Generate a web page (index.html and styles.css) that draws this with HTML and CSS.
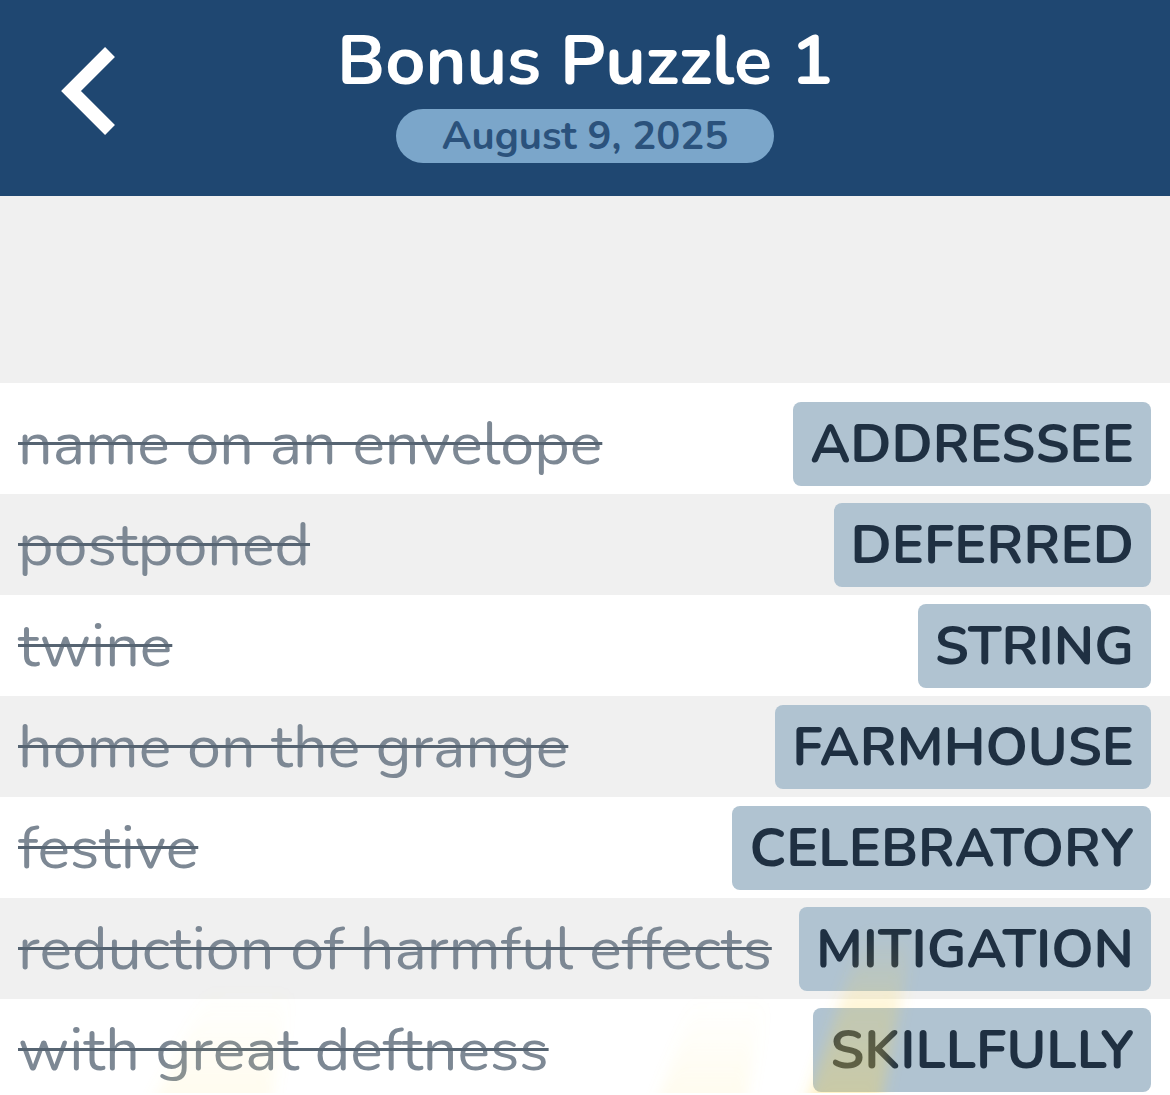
FILE: index.html
```html
<!DOCTYPE html>
<html>
<head>
    <title>Bonus Puzzle 1</title>
    <link rel="stylesheet" href="styles.css">
</head>
<body>
    <div class="header">
        <a class="back" href="#">
            <svg width="60" height="92" viewBox="0 0 60 92">
                <polyline points="50,6 11,45 50,84" fill="none" stroke="#fff" stroke-width="14" stroke-linejoin="miter"/>
            </svg>
        </a>
        <div class="title-block">
            <h1>Bonus Puzzle 1</h1>
            <div class="date">August 9, 2025</div>
        </div>
        <div></div>
    </div>

    <div class="spacer"></div>

    <div class="clues">
        <div class="clue-row">
            <span class="clue">name on an envelope</span>
            <span class="answer">ADDRESSEE</span>
        </div>
        <div class="clue-row">
            <span class="clue">postponed</span>
            <span class="answer">DEFERRED</span>
        </div>
        <div class="clue-row">
            <span class="clue">twine</span>
            <span class="answer">STRING</span>
        </div>
        <div class="clue-row">
            <span class="clue">home on the grange</span>
            <span class="answer">FARMHOUSE</span>
        </div>
        <div class="clue-row">
            <span class="clue">festive</span>
            <span class="answer">CELEBRATORY</span>
        </div>
        <div class="clue-row">
            <span class="clue">reduction of harmful effects</span>
            <span class="answer">MITIGATION</span>
        </div>
        <div class="clue-row">
            <span class="clue">with great deftness</span>
            <span class="answer">SKILLFULLY</span>
        </div>

        <!-- faint confetti streaks drifting over the list -->
        <svg class="streaks" width="1170" height="200" viewBox="0 0 1170 200">
            <defs>
                <filter id="soft" x="-50%" y="-50%" width="200%" height="200%">
                    <feGaussianBlur stdDeviation="7"/>
                </filter>
                <linearGradient id="fade" x1="0" y1="1" x2="0" y2="0">
                    <stop offset="0" stop-color="#ffd84d" stop-opacity="0.34"/>
                    <stop offset="0.55" stop-color="#ffd84d" stop-opacity="0.22"/>
                    <stop offset="1" stop-color="#ffd84d" stop-opacity="0"/>
                </linearGradient>
                <linearGradient id="faint" x1="0" y1="1" x2="0" y2="0">
                    <stop offset="0" stop-color="#ffe27a" stop-opacity="0.14"/>
                    <stop offset="1" stop-color="#ffe27a" stop-opacity="0"/>
                </linearGradient>
            </defs>
            <g filter="url(#soft)">
                <polygon points="150,210 270,210 290,90 210,90" fill="url(#faint)"/>
                <polygon points="655,210 745,210 765,100 695,100" fill="url(#faint)"/>
                <polygon points="805,210 880,210 915,30 865,30" fill="url(#fade)"/>
            </g>
        </svg>
    </div>
</body>
</html>
```

FILE: styles.css
```css
/* Bonus puzzle results page */
body {
    font-family: "Nunito", "Inter", sans-serif;
    margin: 0;
    padding: 0;
    background: #fff;
    overflow: hidden;
}

.header {
    background: #1f4771;
    height: 196px;
    box-sizing: border-box;
    padding-top: 26px;
    display: grid;
    grid-template-columns: 1fr auto 1fr;
}

.back {
    display: flex;
    align-items: flex-start;
    padding-left: 60px;
    padding-top: 20px;
}

.title-block {
    display: flex;
    flex-direction: column;
    align-items: center;
}

h1 {
    margin: 0;
    color: #fff;
    font-size: 70px;
    line-height: 70px;
    font-weight: 700;
}

.date {
    margin-top: 13px;
    height: 54px;
    line-height: 54px;
    padding: 0 46px;
    border-radius: 27px;
    background: #7ba6ca;
    color: #2b527c;
    font-size: 40px;
    font-weight: 700;
}

.spacer {
    height: 187px;
    background: #f0f0f0;
}

.clues {
    position: relative;
    padding-top: 10px;
    height: 700px;
}

.clue-row {
    height: 101px;
    display: flex;
    align-items: center;
    justify-content: space-between;
    padding: 0 19px 0 18px;
}

.clue-row:nth-child(even) {
    background: #f0f0f0;
}

.clue {
    font-size: 61px;
    color: #7d8894;
    text-decoration: line-through;
    text-decoration-color: #566472;
    text-decoration-thickness: 3px;
    white-space: nowrap;
}

.answer {
    height: 84px;
    line-height: 84px;
    padding: 0 17px;
    border-radius: 8px;
    background: #b0c3d1;
    color: #1f3042;
    font-size: 54px;
    font-weight: 700;
}

.streaks {
    position: absolute;
    left: 0;
    top: 515px;
    pointer-events: none;
}
```
